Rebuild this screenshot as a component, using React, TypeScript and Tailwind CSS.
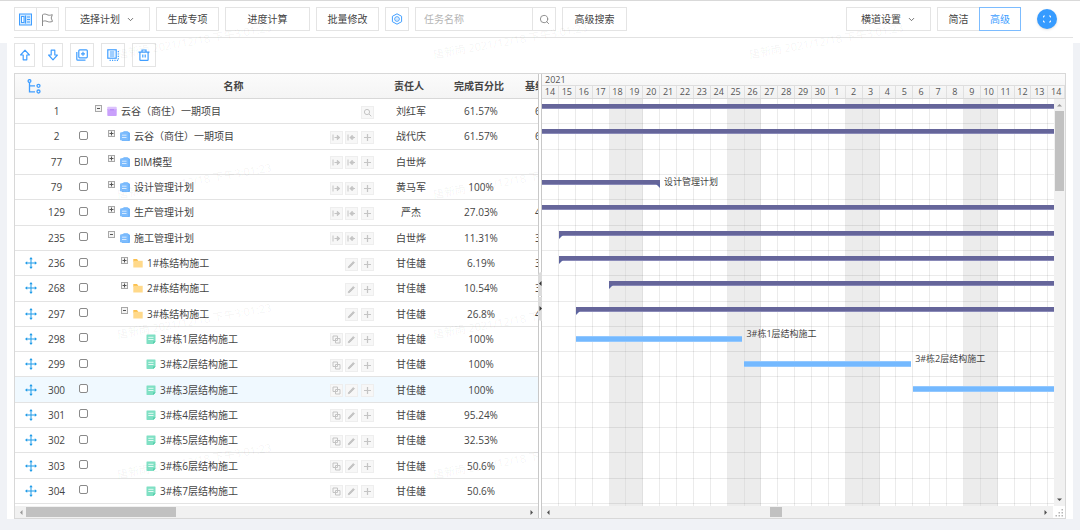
import type { ReactNode } from 'react';
import { ChevronDown, Search } from 'lucide-react';
import clsx from 'clsx';

type Kind = 'root' | 'plan' | 'folder' | 'task';

interface Row {
  id: number;
  name: string;
  level: number;
  kind: Kind;
  open?: boolean;
  owner: string;
  percent: string;
  baseline: string;
  // day offsets from the first visible day
  bar?: { from: number; to: number; label?: boolean };
}

const rows: Row[] = [
  { id: 1, name: '云谷（商住）一期项目', level: 0, kind: 'root', open: true, owner: '刘红军', percent: '61.57%', baseline: '61.57%', bar: { from: -1, to: 32 } },
  { id: 2, name: '云谷（商住）一期项目', level: 1, kind: 'plan', owner: '战代庆', percent: '61.57%', baseline: '61.57%', bar: { from: -1, to: 32 } },
  { id: 77, name: 'BIM模型', level: 1, kind: 'plan', owner: '白世烨', percent: '', baseline: '' },
  { id: 79, name: '设计管理计划', level: 1, kind: 'plan', owner: '黄马军', percent: '100%', baseline: '', bar: { from: -1, to: 7, label: true } },
  { id: 129, name: '生产管理计划', level: 1, kind: 'plan', owner: '严杰', percent: '27.03%', baseline: '42.35%', bar: { from: -1, to: 32 } },
  { id: 235, name: '施工管理计划', level: 1, kind: 'plan', open: true, owner: '白世烨', percent: '11.31%', baseline: '31.26%', bar: { from: 1, to: 32 } },
  { id: 236, name: '1#栋结构施工', level: 2, kind: 'folder', owner: '甘佳雄', percent: '6.19%', baseline: '32.14%', bar: { from: 1, to: 32 } },
  { id: 268, name: '2#栋结构施工', level: 2, kind: 'folder', owner: '甘佳雄', percent: '10.54%', baseline: '35.71%', bar: { from: 4, to: 32 } },
  { id: 297, name: '3#栋结构施工', level: 2, kind: 'folder', open: true, owner: '甘佳雄', percent: '26.8%', baseline: '41.25%', bar: { from: 2, to: 32 } },
  { id: 298, name: '3#栋1层结构施工', level: 3, kind: 'task', owner: '甘佳雄', percent: '100%', baseline: '', bar: { from: 2, to: 11.88, label: true } },
  { id: 299, name: '3#栋2层结构施工', level: 3, kind: 'task', owner: '甘佳雄', percent: '100%', baseline: '', bar: { from: 12, to: 21.88, label: true } },
  { id: 300, name: '3#栋3层结构施工', level: 3, kind: 'task', owner: '甘佳雄', percent: '100%', baseline: '', bar: { from: 22, to: 32 } },
  { id: 301, name: '3#栋4层结构施工', level: 3, kind: 'task', owner: '甘佳雄', percent: '95.24%', baseline: '' },
  { id: 302, name: '3#栋5层结构施工', level: 3, kind: 'task', owner: '甘佳雄', percent: '32.53%', baseline: '' },
  { id: 303, name: '3#栋6层结构施工', level: 3, kind: 'task', owner: '甘佳雄', percent: '50.6%', baseline: '' },
  { id: 304, name: '3#栋7层结构施工', level: 3, kind: 'task', owner: '甘佳雄', percent: '50.6%', baseline: '' },
];

const SELECTED = 300;

const days = [...Array.from({ length: 17 }, (_, i) => i + 14), ...Array.from({ length: 14 }, (_, i) => i + 1)];
const isWeekend = (i: number) => i % 7 === 4 || i % 7 === 5;
const pct = (n: number) => `${(n / days.length) * 100}%`;

/* ---------- icons ---------- */

function Svg({ size, children, className }: { size: number; children: ReactNode; className?: string }) {
  return (
    <svg width={size} height={size} viewBox={`0 0 ${size} ${size}`} fill="none" stroke="currentColor" className={clsx('shrink-0', className)} aria-hidden="true">
      {children}
    </svg>
  );
}

const GanttIcon = () => (
  <Svg size={13}>
    <rect x="0.5" y="1" width="12" height="11" fill="#d3eaff" />
    <rect x="2.5" y="3.5" width="2.5" height="6" fill="#fff" />
    <path d="M6.5 2.5v8M8 4h3M8 6.5h3M8 9h3" strokeWidth="1.2" />
  </Svg>
);

const FlagIcon = () => (
  <Svg size={13} className="text-[#8c8c8c]">
    <path d="M1.5 13V1.8c1.6-1 3-.9 4.4-.2 1.6.8 3 .9 5.400.1L10.200 5l1.300 3.400c-2 .8-3.800.7-5.400 0-1.600-.7-3-.7-4.600.1" />
  </Svg>
);

const HexIcon = () => (
  <Svg size={12}>
    <path d="M6 .8l4.600 2.500v5.400L6 11.200 1.400 8.700V3.300z" strokeLinejoin="round" />
    <circle cx="6" cy="6" r="2.300" />
    <circle cx="6" cy="6" r=".6" fill="currentColor" stroke="none" />
  </Svg>
);

const UpIcon = () => (
  <Svg size={12}>
    <path d="M6 1.200L1.600 6h2.600v4.800h3.600V6h2.600z" strokeWidth="1.200" strokeLinejoin="round" />
  </Svg>
);

const DownIcon = () => (
  <Svg size={12}>
    <path d="M6 10.800L1.600 6h2.600V1.200h3.600V6h2.600z" strokeWidth="1.200" strokeLinejoin="round" />
  </Svg>
);

const CopyPlusIcon = () => (
  <Svg size={12}>
    <rect x="2.800" y=".8" width="8.500" height="8" rx="1" strokeWidth="1.200" />
    <path d="M7 2.800v4M5 4.800h4M.8 3v7.200c0 .6.4 1 1 1h7.700" strokeWidth="1.200" />
  </Svg>
);

const ListIcon = () => (
  <Svg size={12}>
    <rect x=".8" y=".8" width="8.400" height="8.400" strokeWidth="1.200" />
    <path d="M2.800 3h4.500M2.800 5h4.500M2.800 7h4.500" />
    <path d="M11.300 2v9.300H2" strokeWidth="1.200" strokeDasharray="1.200 1.200" />
  </Svg>
);

const TrashIcon = () => (
  <Svg size={12}>
    <path d="M.5 3.200h11M4 3V1h4v2M1.900 3.200v7.500c0 .4.2.6.6.6h7c.4 0 .6-.2.6-.6V3.200" strokeWidth="1.200" />
    <path d="M4.500 5.500v3M6 5.500v3M7.500 5.500v3" strokeWidth=".8" />
  </Svg>
);

const TreeIcon = () => (
  <Svg size={15} className="text-[#409eff]">
    <g strokeWidth="1.300">
      <circle cx="2.500" cy="2" r="1.400" />
      <circle cx="11.500" cy="6.800" r="1.500" />
      <circle cx="11.500" cy="12.500" r="1.500" />
      <path d="M2.500 3.500v9.300h5.500M2.500 6.800h5.500" />
    </g>
  </Svg>
);

const MoveIcon = () => (
  <Svg size={12} className="mx-auto text-[#1f9be8]">
    <path d="M6 1.500v9M1.500 6h9" />
    <path d="M6 0l1.700 2.200H4.300zM6 12l1.700-2.200H4.300zM0 6l2.200-1.700v3.400zM12 6L9.800 4.300v3.400z" fill="currentColor" stroke="none" />
  </Svg>
);

function KindIcon({ kind }: { kind: Kind }) {
  if (kind === 'root')
    return (
      <Svg size={10}>
        <g stroke="none">
          <rect x=".3" y="2.500" width="9.400" height="7.500" rx=".8" fill="#c9a0fb" />
          <rect x=".3" y=".8" width="9.400" height="2.400" rx=".8" fill="#dcc2fd" />
          <path d="M3 3.800h4" stroke="#b283f2" />
        </g>
      </Svg>
    );
  if (kind === 'plan')
    return (
      <Svg size={10}>
        <g stroke="none">
          <path d="M2 1.500L4 .2h3.500L10 2v7.200c0 .5-.3.8-.8.8H2z" fill="#6db3fb" />
          <rect x="0" y="1.200" width="8.300" height="8.300" rx="1.200" fill="#7dbcfd" />
          <path d="M2 4.200h4.500M2 6.500h4.500" stroke="#d6eaff" />
        </g>
      </Svg>
    );
  if (kind === 'folder')
    return (
      <Svg size={10}>
        <g stroke="none">
          <path d="M.3 1h3.700l1.200 1.800v1H.3z" fill="#fbc04d" />
          <path d="M.3 2.800h9.400v6.700H.3z" fill="#ffd98a" />
        </g>
      </Svg>
    );
  return (
    <Svg size={10}>
      <g stroke="none">
        <path d="M1 .5h8c.3 0 .5.2.5.5v6.500L7.300 10H1c-.3 0-.5-.2-.5-.5V1c0-.3.2-.5.5-.5z" fill="#7fe0c4" />
        <path d="M7.300 10V7.500h2.200z" fill="#3fc8a0" />
        <path d="M2.300 3.300h5.200M2.300 5.500h5.200" stroke="#e3faf3" />
      </g>
    </Svg>
  );
}

type Action = 'search' | 'indent' | 'outdent' | 'edit' | 'copy' | 'add';

const actionPaths: Record<Action, ReactNode> = {
  search: (
    <>
      <circle cx="4" cy="4" r="2.600" />
      <path d="M6 6l2.300 2.300" />
    </>
  ),
  indent: <path d="M1 1.500v6M3 4.500h5M5.200 2.300L3 4.500l2.200 2.200zM6 3v3" fill="currentColor" />,
  outdent: <path d="M1 1.500v6M2.500 4.500h5M5.300 2.300l2.500 2.200-2.500 2.200z" fill="currentColor" />,
  edit: <path d="M1.300 7.700l.4-1.500L6.300 1.600l1.100 1.100-4.600 4.600z" fill="currentColor" />,
  copy: <path d="M1 1h4.500v4.500H1zM3.500 3.500H8V8H3.500z" />,
  add: <path d="M4.500 1v7M1 4.500h7" strokeWidth="1.200" />,
};

const actionTitles: Record<Action, string> = {
  search: '查找',
  indent: '降级',
  outdent: '升级',
  edit: '编辑',
  copy: '复制',
  add: '新增',
};

const kindActions: Record<Kind, Action[]> = {
  root: ['search'],
  plan: ['outdent', 'indent', 'add'],
  folder: ['edit', 'add'],
  task: ['copy', 'edit', 'add'],
};

/* ---------- small parts ---------- */

function Btn({ className, children, label }: { className?: string; children: ReactNode; label?: string }) {
  return (
    <button
      type="button"
      aria-label={label}
      className={clsx('flex h-6 shrink-0 items-center justify-center gap-1.5 border bg-white hover:border-[#409eff]', className)}
    >
      {children}
    </button>
  );
}

function Arrow({ dir, className }: { dir: 'left' | 'right' | 'up' | 'down'; className?: string }) {
  const d = {
    left: 'M4.500 1v5L2 3.500z',
    right: 'M2.500 1v5L5 3.500z',
    up: 'M1 4.500h5L3.500 2z',
    down: 'M1 2.500h5L3.500 5z',
  }[dir];
  return (
    <svg width="7" height="7" viewBox="0 0 7 7" fill="currentColor" className={clsx('shrink-0', className)} aria-hidden="true">
      <path d={d} />
    </svg>
  );
}

function Watermarks() {
  return (
    <div aria-hidden="true" className="pointer-events-none absolute inset-0 overflow-hidden">
      {[0, 1, 2, 3].map((r) => (
        <div key={r} className="flex h-[140px] gap-[156px] pt-8 pl-[124px]">
          {[0, 1, 2].map((c) => (
            <span key={c} className="w-40 shrink-0 rotate-[-10deg] whitespace-nowrap text-[11px] leading-4 text-black/5">
              唐新雨 2021/12/18 下午3:01:23
            </span>
          ))}
        </div>
      ))}
    </div>
  );
}

function Toggle({ open }: { open?: boolean }) {
  return (
    <button type="button" aria-label={open ? '收起' : '展开'} className="mb-1.5 shrink-0 text-[#555]">
      <svg width="7" height="7" viewBox="0 0 7 7" fill="none" stroke="currentColor" aria-hidden="true">
        <rect x=".5" y=".5" width="6" height="6" stroke="#a8a8a8" fill="#f4f4f4" />
        <path d={open ? 'M2 3.500h3' : 'M1.500 3.500h4M3.500 1.500v4'} />
      </svg>
    </button>
  );
}

/* ---------- toolbar ---------- */

function Toolbar() {
  return (
    <header className="border-t border-[#d9d9d9] bg-white pb-[5px]">
      <div className="mr-[7px] ml-3.5 flex items-center gap-1.5 border-b border-[#e2e2e2] py-1.5 pr-4">
        <div className="flex text-[#409eff]">
          <Btn className="w-[23px] border-[#e4e4e4]" label="横道图">
            <GanttIcon />
          </Btn>
          <Btn className="w-[22px] border-l-0 border-[#e4e4e4]" label="里程碑">
            <FlagIcon />
          </Btn>
        </div>
        <Btn className="w-[85px] border-[#e4e4e4]">
          选择计划 <ChevronDown size={9} />
        </Btn>
        <Btn className="w-[63px] border-[#e4e4e4]">生成专项</Btn>
        <Btn className="w-[85px] border-[#e4e4e4]">进度计算</Btn>
        <Btn className="w-[63px] border-[#e4e4e4]">批量修改</Btn>
        <Btn className="w-6 border-[#e4e4e4] text-[#409eff]" label="设置">
          <HexIcon />
        </Btn>
        <div className="flex">
          <input
            aria-label="任务名称"
            placeholder="任务名称"
            className="h-6 w-[118px] border border-[#e4e4e4] bg-white px-2 outline-none placeholder:text-[#b5b5b5]"
          />
          <Btn className="w-[23px] border-l-0 border-[#e4e4e4] text-[#888]" label="搜索">
            <Search size={11} />
          </Btn>
        </div>
        <Btn className="w-[65px] border-[#e4e4e4]">高级搜索</Btn>

        <Btn className="ml-auto w-[85px] border-[#e4e4e4]">
          横道设置 <ChevronDown size={9} />
        </Btn>
        <div className="flex">
          <Btn className="w-[42px] border-r-0 border-[#e4e4e4]">简洁</Btn>
          <Btn className="w-[42px] border-[#7cbcff] text-[#409eff]">高级</Btn>
        </div>
        <button type="button" aria-label="全屏" className="ml-2.5 flex size-5 shrink-0 items-center justify-center rounded-full bg-[#369bff] text-white shadow">
          <Svg size={10}>
            <path d="M1.500 3.500v-1.500h1.500M7 2h1.500v1.500M8.500 6.500v1.500H7M3 8H1.500V6.500" strokeWidth=".9" />
          </Svg>
        </button>
      </div>
    </header>
  );
}

/* ---------- task table ---------- */

function TaskTable() {
  return (
    <div className="min-h-0 flex-1 overflow-hidden pb-0.5">
      <table className="h-full w-[573px] min-w-full table-fixed border-separate border-spacing-0">
        <colgroup>
          <col className="w-[31px]" />
          <col className="w-[21px]" />
          <col className="w-7" />
          <col />
          <col className="w-[70px]" />
          <col className="w-[70px]" />
          <col className="w-[72px]" />
        </colgroup>
        <thead>
          <tr className="h-[25px] bg-linear-to-b from-[#fbfbfb] to-[#f4f4f4] *:border-b *:border-[#d8d8d8] *:p-0 *:font-bold">
            <th colSpan={3} aria-label="层级">
              <div className="pl-3">
                <TreeIcon />
              </div>
            </th>
            <th>
              <div className="pr-1">名称</div>
            </th>
            <th>
              <div className="pr-1">责任人</div>
            </th>
            <th>
              <div className="pr-1">完成百分比</div>
            </th>
            <th className="whitespace-nowrap">
              <div className="pr-1">基线百分比</div>
            </th>
          </tr>
        </thead>
        <tbody>
          {rows.map((row) => (
            <tr
              key={row.id}
              className={clsx('text-center *:border-b *:border-[#e3e3e3] *:p-0', row.id === SELECTED && 'bg-[#f0f9ff]')}
            >
              <td>{row.level > 1 && <MoveIcon />}</td>
              <td className="whitespace-nowrap">
                <div className="flex justify-center">{row.id}</div>
              </td>
              <td>
                {row.level > 0 && (
                  <input
                    type="checkbox"
                    aria-label={`选择 ${row.id}`}
                    className="mb-0.5 ml-3 block size-[9px] appearance-none rounded-xs border border-[#8a8a8a] bg-white checked:bg-[#409eff]"
                  />
                )}
              </td>
              <td>
                <div className="flex items-center pr-0.5">
                  <div className="flex shrink-0" style={{ width: row.level * 13 }} />
                  <div className="flex w-3 shrink-0">{row.kind !== 'task' && <Toggle open={row.open} />}</div>
                  <KindIcon kind={row.kind} />
                  <span className="ml-1 flex-1 text-left whitespace-nowrap">{row.name}</span>
                  <div className="mt-0.5 flex gap-0.5 text-[#c4c4c4]">
                    {kindActions[row.kind].map((a) => (
                      <button
                        key={a}
                        type="button"
                        aria-label={actionTitles[a]}
                        className={clsx('flex size-[13px] items-center justify-center border border-[#eeeeee] bg-[#f7f7f7]', a === 'add' && 'ml-px')}
                      >
                        <Svg size={9}>{actionPaths[a]}</Svg>
                      </button>
                    ))}
                  </div>
                </div>
              </td>
              <td>{row.owner}</td>
              <td>{row.percent}</td>
              <td>{row.baseline}</td>
            </tr>
          ))}
        </tbody>
      </table>
    </div>
  );
}

/* ---------- gantt chart ---------- */

function Bar({ row }: { row: Row }) {
  if (!row.bar) return null;
  const { from, to, label } = row.bar;
  const task = row.kind === 'task';
  return (
    <>
      <div
        className={clsx('absolute', task ? 'top-[9px] h-1.5 border-y border-[#93c8ff] bg-[#74b9ff]' : 'top-[5px] h-[5px] border-b border-[#8a8ab8] bg-[#65659a]')}
        style={{ left: pct(from), width: pct(to - from) }}
      >
        {!task && from > 0 && (
          <svg width="4" height="4" viewBox="0 0 4 4" className="absolute top-full left-0" aria-hidden="true">
            <path d="M0 0h4L0 4z" fill="#5c64a0" />
          </svg>
        )}
        {!task && to < days.length && (
          <svg width="4" height="4" viewBox="0 0 4 4" className="absolute top-full right-0" aria-hidden="true">
            <path d="M0 0h4v4z" fill="#5c64a0" />
          </svg>
        )}
      </div>
      {label && (
        <span className="absolute top-px ml-1 text-[9px] leading-3 whitespace-nowrap text-[#444]" style={{ left: pct(to) }}>
          {row.name}
        </span>
      )}
    </>
  );
}

function Chart() {
  return (
    <div className="flex min-h-0 flex-1 flex-col">
      <div className="shrink-0 bg-linear-to-b from-[#fbfbfb] to-[#f1f1f1] text-[9px] text-[#555]">
        <div className="h-3 border-b border-[#dedede] pl-[3px] leading-3">2021</div>
        <div className="flex h-[13px] border-b border-[#d8d8d8] leading-3">
          {days.map((d, i) => (
            <div key={i} className="flex min-w-0 flex-1 justify-center border-r border-[#e0e0e0]">
              {d}
            </div>
          ))}
        </div>
      </div>
      <div className="relative min-h-0 flex-1 overflow-hidden">
        <div className="absolute inset-0 flex">
          {days.map((_, i) => (
            <div key={i} className={clsx('flex-1 border-r', isWeekend(i) ? 'border-[#e0e0e0] bg-[#ececec]' : 'border-[#ebebeb]')} />
          ))}
        </div>
        <div className="relative flex h-full flex-col pb-0.5">
          {rows.map((row) => (
            <div key={row.id} className="relative flex-1 border-b border-black/8">
              <Bar row={row} />
            </div>
          ))}
        </div>
        {/* vertical scrollbar */}
        <div className="absolute inset-y-0 right-0 flex w-[11px] flex-col items-center bg-[#f1f1f1] py-[3px]">
          <Arrow dir="up" className="text-[#999]" />
          <div className="mt-0.5 h-1/5 w-[9px] bg-[#c1c1c1]" />
          <Arrow dir="down" className="mt-auto text-[#505050]" />
        </div>
      </div>
    </div>
  );
}

export default function App() {
  return (
    <div className="relative isolate flex h-screen flex-col bg-[#f0f2f6] pb-[11px] font-['Open_Sans','Noto_Sans_CJK_SC',sans-serif] text-[10px] leading-4 text-[#444]">
      <Toolbar />
      <main className="mx-[7px] flex min-h-0 flex-1 flex-col bg-white px-[7px]">
        <div className="mb-1.5 flex gap-[7px] text-[#409eff]">
          <Btn className="w-[21px] border-[#e4e4e4]" label="上移">
            <UpIcon />
          </Btn>
          <Btn className="w-[21px] border-[#e4e4e4]" label="下移">
            <DownIcon />
          </Btn>
          <Btn className="w-6 border-[#e4e4e4]" label="插入">
            <CopyPlusIcon />
          </Btn>
          <Btn className="w-6 border-[#e4e4e4]" label="批量">
            <ListIcon />
          </Btn>
          <Btn className="w-6 border-[#e4e4e4]" label="删除">
            <TrashIcon />
          </Btn>
        </div>

        <div className="flex min-h-0 flex-1 border border-[#d8d8d8]">
          <section className="flex min-w-0 flex-1 flex-col">
            <TaskTable />
            <div className="flex h-3 shrink-0 items-center bg-[#f1f1f1] px-[3px]">
              <Arrow dir="left" className="text-[#999]" />
              <div className="ml-px h-2.5 w-[29%] bg-[#c1c1c1]" />
              <Arrow dir="right" className="ml-auto text-[#505050]" />
            </div>
          </section>

          {/* splitter */}
          <div className="relative z-10 flex w-1 shrink-0 flex-col justify-center border-x border-x-[#c8c8c8] bg-white">
            <div className="-mx-px flex flex-col items-stretch gap-px text-[#333]">
              <button type="button" aria-label="向左收起" className="flex h-6 items-center justify-center rounded-tl bg-[#dcdcdc]">
                <Arrow dir="left" />
              </button>
              <button type="button" aria-label="向右收起" className="flex h-6 items-center justify-center rounded-bl bg-[#dcdcdc]">
                <Arrow dir="right" />
              </button>
            </div>
          </div>

          <section className="relative z-10 flex min-w-0 flex-1 flex-col bg-white">
            <Chart />
            <div className="flex h-3 shrink-0 items-center bg-[#f1f1f1] pl-[3px]">
              <Arrow dir="left" className="text-[#505050]" />
              <div className="ml-[42%] h-2.5 w-3 bg-[#c1c1c1]" />
              <Arrow dir="right" className="mr-1 ml-auto text-[#505050]" />
              <svg width="12" height="12" viewBox="0 0 12 12" fill="#b5b5b5" className="bg-white" aria-hidden="true">
                <path d="M8.500 3h1.500v1.500H8.500zM8.500 6h1.500v1.500H8.500zM5.500 6H7v1.500H5.500zM8.500 9h1.500v1.500H8.500zM5.500 9H7v1.500H5.500zM2.500 9H4v1.500H2.500z" />
              </svg>
            </div>
          </section>
        </div>
      </main>
      <Watermarks />
    </div>
  );
}
